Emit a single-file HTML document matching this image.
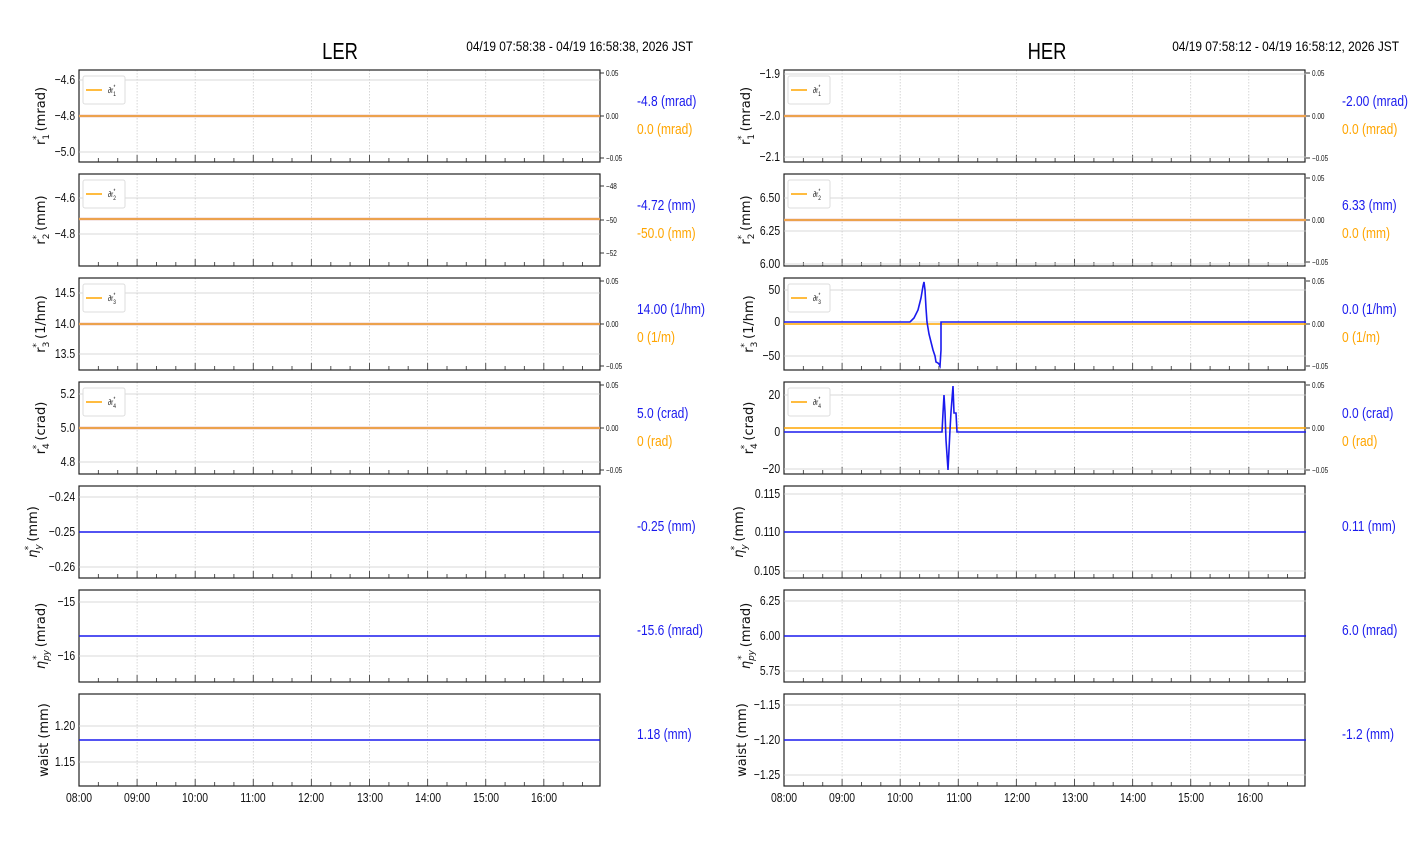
<!DOCTYPE html>
<html><head><meta charset="utf-8"><style>
html,body{margin:0;padding:0;background:#fff;width:1412px;height:864px;overflow:hidden}
svg{display:block}
.t{font-family:"Liberation Sans",sans-serif;font-size:13px;fill:#111}
.s{font-family:"Liberation Sans",sans-serif;font-size:8px;fill:#111}
.yl{font-family:"DejaVu Sans","Liberation Sans",sans-serif;font-size:13px;fill:#111}
.v{font-family:"Liberation Sans",sans-serif;font-size:15px}
.ti{font-family:"Liberation Sans",sans-serif;font-size:23px;fill:#000}
.hd{font-family:"Liberation Sans",sans-serif;font-size:14px;fill:#000}
text.t,text.s,.t text,.v text,text.ti,text.hd{transform-box:fill-box;transform:scaleX(.8);transform-origin:left center}
text.hd{transform:scaleX(.85)}
text.t[text-anchor="end"],text.hd{transform-origin:right center}
.t[text-anchor="middle"] text,text.ti{transform-origin:center center}
</style></head><body>
<svg width="1412" height="864" viewBox="0 0 1412 864" xmlns="http://www.w3.org/2000/svg">
<defs>
<g id="fr">
<g stroke="#ccc" stroke-width="0.8" stroke-dasharray="1.5,1.5">
<line x1="58.1" y1="0" x2="58.1" y2="92"/><line x1="116.2" y1="0" x2="116.2" y2="92"/><line x1="174.3" y1="0" x2="174.3" y2="92"/><line x1="232.4" y1="0" x2="232.4" y2="92"/><line x1="290.5" y1="0" x2="290.5" y2="92"/><line x1="348.6" y1="0" x2="348.6" y2="92"/><line x1="406.7" y1="0" x2="406.7" y2="92"/><line x1="464.8" y1="0" x2="464.8" y2="92"/>
</g>
<g stroke="#555" stroke-width="1">
<line x1="0" y1="92" x2="0" y2="85"/><line x1="58.1" y1="92" x2="58.1" y2="85"/><line x1="116.2" y1="92" x2="116.2" y2="85"/><line x1="174.3" y1="92" x2="174.3" y2="85"/><line x1="232.4" y1="92" x2="232.4" y2="85"/><line x1="290.5" y1="92" x2="290.5" y2="85"/><line x1="348.6" y1="92" x2="348.6" y2="85"/><line x1="406.7" y1="92" x2="406.7" y2="85"/><line x1="464.8" y1="92" x2="464.8" y2="85"/>
<line x1="19.4" y1="92" x2="19.4" y2="88"/><line x1="38.7" y1="92" x2="38.7" y2="88"/><line x1="77.5" y1="92" x2="77.5" y2="88"/><line x1="96.8" y1="92" x2="96.8" y2="88"/><line x1="135.6" y1="92" x2="135.6" y2="88"/><line x1="154.9" y1="92" x2="154.9" y2="88"/><line x1="193.7" y1="92" x2="193.7" y2="88"/><line x1="213" y1="92" x2="213" y2="88"/><line x1="251.8" y1="92" x2="251.8" y2="88"/><line x1="271.1" y1="92" x2="271.1" y2="88"/><line x1="309.9" y1="92" x2="309.9" y2="88"/><line x1="329.2" y1="92" x2="329.2" y2="88"/><line x1="368" y1="92" x2="368" y2="88"/><line x1="387.3" y1="92" x2="387.3" y2="88"/><line x1="426.1" y1="92" x2="426.1" y2="88"/><line x1="445.4" y1="92" x2="445.4" y2="88"/><line x1="484.2" y1="92" x2="484.2" y2="88"/><line x1="503.5" y1="92" x2="503.5" y2="88"/>
</g>
<rect x="0" y="0" width="521" height="92" fill="none" stroke="#222" stroke-width="1.2"/>
</g>
<g id="lg">
<rect x="4" y="6" width="42" height="28" rx="2" fill="#fff" stroke="#ddd"/>
<line x1="7" y1="20" x2="23" y2="20" stroke="#ffa500" stroke-width="1.5"/>
</g>
</defs>

<text class="ti" x="340" y="59" text-anchor="middle">LER</text>
<text class="hd" x="693" y="51" text-anchor="end">04/19 07:58:38 - 04/19 16:58:38, 2026 JST</text>
<text class="ti" x="1047" y="59" text-anchor="middle">HER</text>
<text class="hd" x="1399" y="51" text-anchor="end">04/19 07:58:12 - 04/19 16:58:12, 2026 JST</text>

<!-- LEFT -->
<g transform="translate(79,70)"><use href="#fr"/>
<g stroke="#ccc" stroke-width="0.8"><line x1="0" y1="10" x2="521" y2="10"/><line x1="0" y1="46" x2="521" y2="46"/><line x1="0" y1="82" x2="521" y2="82"/></g>
<line x1="0" y1="46" x2="521" y2="46" stroke="#d9a09a" stroke-width="2.5"/><line x1="0" y1="46" x2="521" y2="46" stroke="#ffa500" stroke-width="1"/>
<use href="#lg"/><text class="s" x="29" y="23">∂r<tspan font-size="6" dy="3">1</tspan><tspan font-size="6" dx="-3" dy="-7">*</tspan></text>
<text class="t" x="-4" y="14" text-anchor="end">−4.6</text><text class="t" x="-4" y="50" text-anchor="end">−4.8</text><text class="t" x="-4" y="86" text-anchor="end">−5.0</text>
<g stroke="#333"><line x1="521" y1="3" x2="525" y2="3"/><line x1="521" y1="46" x2="525" y2="46"/><line x1="521" y1="88" x2="525" y2="88"/></g>
<text class="s" x="527" y="6">0.05</text><text class="s" x="527" y="49">0.00</text><text class="s" x="527" y="91">−0.05</text>
</g>
<g transform="translate(79,174)"><use href="#fr"/>
<g stroke="#ccc" stroke-width="0.8"><line x1="0" y1="24" x2="521" y2="24"/><line x1="0" y1="60" x2="521" y2="60"/></g>
<line x1="0" y1="45" x2="521" y2="45" stroke="#d9a09a" stroke-width="2.5"/><line x1="0" y1="45" x2="521" y2="45" stroke="#ffa500" stroke-width="1"/>
<use href="#lg"/><text class="s" x="29" y="23">∂r<tspan font-size="6" dy="3">2</tspan><tspan font-size="6" dx="-3" dy="-7">*</tspan></text>
<text class="t" x="-4" y="28" text-anchor="end">−4.6</text><text class="t" x="-4" y="64" text-anchor="end">−4.8</text>
<g stroke="#333"><line x1="521" y1="12" x2="525" y2="12"/><line x1="521" y1="46" x2="525" y2="46"/><line x1="521" y1="79" x2="525" y2="79"/></g>
<text class="s" x="527" y="15">−48</text><text class="s" x="527" y="49">−50</text><text class="s" x="527" y="82">−52</text>
</g>
<g transform="translate(79,278)"><use href="#fr"/>
<g stroke="#ccc" stroke-width="0.8"><line x1="0" y1="15" x2="521" y2="15"/><line x1="0" y1="46" x2="521" y2="46"/><line x1="0" y1="76" x2="521" y2="76"/></g>
<line x1="0" y1="46" x2="521" y2="46" stroke="#d9a09a" stroke-width="2.5"/><line x1="0" y1="46" x2="521" y2="46" stroke="#ffa500" stroke-width="1"/>
<use href="#lg"/><text class="s" x="29" y="23">∂r<tspan font-size="6" dy="3">3</tspan><tspan font-size="6" dx="-3" dy="-7">*</tspan></text>
<text class="t" x="-4" y="19" text-anchor="end">14.5</text><text class="t" x="-4" y="50" text-anchor="end">14.0</text><text class="t" x="-4" y="80" text-anchor="end">13.5</text>
<g stroke="#333"><line x1="521" y1="3" x2="525" y2="3"/><line x1="521" y1="46" x2="525" y2="46"/><line x1="521" y1="88" x2="525" y2="88"/></g>
<text class="s" x="527" y="6">0.05</text><text class="s" x="527" y="49">0.00</text><text class="s" x="527" y="91">−0.05</text>
</g>
<g transform="translate(79,382)"><use href="#fr"/>
<g stroke="#ccc" stroke-width="0.8"><line x1="0" y1="12" x2="521" y2="12"/><line x1="0" y1="46" x2="521" y2="46"/><line x1="0" y1="80" x2="521" y2="80"/></g>
<line x1="0" y1="46" x2="521" y2="46" stroke="#d9a09a" stroke-width="2.5"/><line x1="0" y1="46" x2="521" y2="46" stroke="#ffa500" stroke-width="1"/>
<use href="#lg"/><text class="s" x="29" y="23">∂r<tspan font-size="6" dy="3">4</tspan><tspan font-size="6" dx="-3" dy="-7">*</tspan></text>
<text class="t" x="-4" y="16" text-anchor="end">5.2</text><text class="t" x="-4" y="50" text-anchor="end">5.0</text><text class="t" x="-4" y="84" text-anchor="end">4.8</text>
<g stroke="#333"><line x1="521" y1="3" x2="525" y2="3"/><line x1="521" y1="46" x2="525" y2="46"/><line x1="521" y1="88" x2="525" y2="88"/></g>
<text class="s" x="527" y="6">0.05</text><text class="s" x="527" y="49">0.00</text><text class="s" x="527" y="91">−0.05</text>
</g>
<g transform="translate(79,486)"><use href="#fr"/>
<g stroke="#ccc" stroke-width="0.8"><line x1="0" y1="11" x2="521" y2="11"/><line x1="0" y1="46" x2="521" y2="46"/><line x1="0" y1="81" x2="521" y2="81"/></g>
<line x1="0" y1="46" x2="521" y2="46" stroke="#1a1aee" stroke-width="1.6"/>
<text class="t" x="-4" y="15" text-anchor="end">−0.24</text><text class="t" x="-4" y="50" text-anchor="end">−0.25</text><text class="t" x="-4" y="85" text-anchor="end">−0.26</text>
</g>
<g transform="translate(79,590)"><use href="#fr"/>
<g stroke="#ccc" stroke-width="0.8"><line x1="0" y1="12" x2="521" y2="12"/><line x1="0" y1="66" x2="521" y2="66"/></g>
<line x1="0" y1="46" x2="521" y2="46" stroke="#1a1aee" stroke-width="1.6"/>
<text class="t" x="-4" y="16" text-anchor="end">−15</text><text class="t" x="-4" y="70" text-anchor="end">−16</text>
</g>
<g transform="translate(79,694)"><use href="#fr"/>
<g stroke="#ccc" stroke-width="0.8"><line x1="0" y1="32" x2="521" y2="32"/><line x1="0" y1="68" x2="521" y2="68"/></g>
<line x1="0" y1="46" x2="521" y2="46" stroke="#1a1aee" stroke-width="1.6"/>
<text class="t" x="-4" y="36" text-anchor="end">1.20</text><text class="t" x="-4" y="72" text-anchor="end">1.15</text>
</g>
<g class="t" text-anchor="middle">
<text x="79" y="802">08:00</text><text x="137" y="802">09:00</text><text x="195" y="802">10:00</text><text x="253" y="802">11:00</text><text x="311" y="802">12:00</text><text x="370" y="802">13:00</text><text x="428" y="802">14:00</text><text x="486" y="802">15:00</text><text x="544" y="802">16:00</text>
</g>

<g class="yl" text-anchor="middle">
<text transform="translate(45,116) rotate(-90)">r<tspan font-size="9" dy="4">1</tspan><tspan font-size="9" dx="-6" dy="-10">*</tspan><tspan dy="6"> (mrad)</tspan></text>
<text transform="translate(45,220) rotate(-90)">r<tspan font-size="9" dy="4">2</tspan><tspan font-size="9" dx="-6" dy="-10">*</tspan><tspan dy="6"> (mm)</tspan></text>
<text transform="translate(45,324) rotate(-90)">r<tspan font-size="9" dy="4">3</tspan><tspan font-size="9" dx="-6" dy="-10">*</tspan><tspan dy="6"> (1/hm)</tspan></text>
<text transform="translate(45,428) rotate(-90)">r<tspan font-size="9" dy="4">4</tspan><tspan font-size="9" dx="-6" dy="-10">*</tspan><tspan dy="6"> (crad)</tspan></text>
<text transform="translate(37,532) rotate(-90)"><tspan font-style="italic">η</tspan><tspan font-size="9" dy="4" font-style="italic">y</tspan><tspan font-size="9" dx="-6" dy="-10">*</tspan><tspan dy="6"> (mm)</tspan></text>
<text transform="translate(45,636) rotate(-90)"><tspan font-style="italic">η</tspan><tspan font-size="9" dy="4" font-style="italic">py</tspan><tspan font-size="9" dx="-10" dy="-10">*</tspan><tspan dx="4" dy="6"> (mrad)</tspan></text>
<text transform="translate(48,740) rotate(-90)">waist (mm)</text>
</g>

<g class="v">
<text x="637" y="106" fill="#1a1aee">-4.8 (mrad)</text><text x="637" y="134" fill="#ffa500">0.0 (mrad)</text>
<text x="637" y="210" fill="#1a1aee">-4.72 (mm)</text><text x="637" y="238" fill="#ffa500">-50.0 (mm)</text>
<text x="637" y="314" fill="#1a1aee">14.00 (1/hm)</text><text x="637" y="342" fill="#ffa500">0 (1/m)</text>
<text x="637" y="418" fill="#1a1aee">5.0 (crad)</text><text x="637" y="446" fill="#ffa500">0 (rad)</text>
<text x="637" y="531" fill="#1a1aee">-0.25 (mm)</text>
<text x="637" y="635" fill="#1a1aee">-15.6 (mrad)</text>
<text x="637" y="739" fill="#1a1aee">1.18 (mm)</text>
</g>

<!-- RIGHT -->
<g transform="translate(784,70)"><use href="#fr"/>
<g stroke="#ccc" stroke-width="0.8"><line x1="0" y1="4" x2="522" y2="4"/><line x1="0" y1="46" x2="522" y2="46"/><line x1="0" y1="87" x2="522" y2="87"/></g>
<line x1="0" y1="46" x2="522" y2="46" stroke="#d9a09a" stroke-width="2.5"/><line x1="0" y1="46" x2="522" y2="46" stroke="#ffa500" stroke-width="1"/>
<use href="#lg"/><text class="s" x="29" y="23">∂r<tspan font-size="6" dy="3">1</tspan><tspan font-size="6" dx="-3" dy="-7">*</tspan></text>
<text class="t" x="-4" y="8" text-anchor="end">−1.9</text><text class="t" x="-4" y="50" text-anchor="end">−2.0</text><text class="t" x="-4" y="91" text-anchor="end">−2.1</text>
<g stroke="#333"><line x1="522" y1="3" x2="526" y2="3"/><line x1="522" y1="46" x2="526" y2="46"/><line x1="522" y1="88" x2="526" y2="88"/></g>
<text class="s" x="528" y="6">0.05</text><text class="s" x="528" y="49">0.00</text><text class="s" x="528" y="91">−0.05</text>
</g>
<g transform="translate(784,174)"><use href="#fr"/>
<g stroke="#ccc" stroke-width="0.8"><line x1="0" y1="24" x2="522" y2="24"/><line x1="0" y1="57" x2="522" y2="57"/><line x1="0" y1="90" x2="522" y2="90"/></g>
<line x1="0" y1="46" x2="522" y2="46" stroke="#d9a09a" stroke-width="2.5"/><line x1="0" y1="46" x2="522" y2="46" stroke="#ffa500" stroke-width="1"/>
<use href="#lg"/><text class="s" x="29" y="23">∂r<tspan font-size="6" dy="3">2</tspan><tspan font-size="6" dx="-3" dy="-7">*</tspan></text>
<text class="t" x="-4" y="28" text-anchor="end">6.50</text><text class="t" x="-4" y="61" text-anchor="end">6.25</text><text class="t" x="-4" y="94" text-anchor="end">6.00</text>
<g stroke="#333"><line x1="522" y1="4" x2="526" y2="4"/><line x1="522" y1="46" x2="526" y2="46"/><line x1="522" y1="88" x2="526" y2="88"/></g>
<text class="s" x="528" y="7">0.05</text><text class="s" x="528" y="49">0.00</text><text class="s" x="528" y="91">−0.05</text>
</g>
<g transform="translate(784,278)"><use href="#fr"/>
<g stroke="#ccc" stroke-width="0.8"><line x1="0" y1="12" x2="522" y2="12"/><line x1="0" y1="44" x2="522" y2="44"/><line x1="0" y1="78" x2="522" y2="78"/></g>
<line x1="0" y1="46" x2="522" y2="46" stroke="#ffa500" stroke-width="1.4"/>
<polyline fill="none" stroke="#1a1aee" stroke-width="1.6" points="0,44 126,44 130,40 134,32 137,20 139,8 140,4 141,12 142,30 143,44 145,56 147,64 149,72 151,78 152,84 154,85 155,86 156,88 157,72 157,44 522,44"/>
<use href="#lg"/><text class="s" x="29" y="23">∂r<tspan font-size="6" dy="3">3</tspan><tspan font-size="6" dx="-3" dy="-7">*</tspan></text>
<text class="t" x="-4" y="16" text-anchor="end">50</text><text class="t" x="-4" y="48" text-anchor="end">0</text><text class="t" x="-4" y="82" text-anchor="end">−50</text>
<g stroke="#333"><line x1="522" y1="3" x2="526" y2="3"/><line x1="522" y1="46" x2="526" y2="46"/><line x1="522" y1="88" x2="526" y2="88"/></g>
<text class="s" x="528" y="6">0.05</text><text class="s" x="528" y="49">0.00</text><text class="s" x="528" y="91">−0.05</text>
</g>
<g transform="translate(784,382)"><use href="#fr"/>
<g stroke="#ccc" stroke-width="0.8"><line x1="0" y1="13" x2="522" y2="13"/><line x1="0" y1="50" x2="522" y2="50"/><line x1="0" y1="87" x2="522" y2="87"/></g>
<line x1="0" y1="46" x2="522" y2="46" stroke="#ffa500" stroke-width="1.4"/>
<polyline fill="none" stroke="#1a1aee" stroke-width="1.6" points="0,50 158,50 159,31 160,13 161,30 162,58 163,73 164,88 165,68 166,48 167,30 169,4 170,31 172,31 173,50 522,50"/>
<use href="#lg"/><text class="s" x="29" y="23">∂r<tspan font-size="6" dy="3">4</tspan><tspan font-size="6" dx="-3" dy="-7">*</tspan></text>
<text class="t" x="-4" y="17" text-anchor="end">20</text><text class="t" x="-4" y="54" text-anchor="end">0</text><text class="t" x="-4" y="91" text-anchor="end">−20</text>
<g stroke="#333"><line x1="522" y1="3" x2="526" y2="3"/><line x1="522" y1="46" x2="526" y2="46"/><line x1="522" y1="88" x2="526" y2="88"/></g>
<text class="s" x="528" y="6">0.05</text><text class="s" x="528" y="49">0.00</text><text class="s" x="528" y="91">−0.05</text>
</g>
<g transform="translate(784,486)"><use href="#fr"/>
<g stroke="#ccc" stroke-width="0.8"><line x1="0" y1="8" x2="522" y2="8"/><line x1="0" y1="46" x2="522" y2="46"/><line x1="0" y1="85" x2="522" y2="85"/></g>
<line x1="0" y1="46" x2="522" y2="46" stroke="#1a1aee" stroke-width="1.6"/>
<text class="t" x="-4" y="12" text-anchor="end">0.115</text><text class="t" x="-4" y="50" text-anchor="end">0.110</text><text class="t" x="-4" y="89" text-anchor="end">0.105</text>
</g>
<g transform="translate(784,590)"><use href="#fr"/>
<g stroke="#ccc" stroke-width="0.8"><line x1="0" y1="11" x2="522" y2="11"/><line x1="0" y1="46" x2="522" y2="46"/><line x1="0" y1="81" x2="522" y2="81"/></g>
<line x1="0" y1="46" x2="522" y2="46" stroke="#1a1aee" stroke-width="1.6"/>
<text class="t" x="-4" y="15" text-anchor="end">6.25</text><text class="t" x="-4" y="50" text-anchor="end">6.00</text><text class="t" x="-4" y="85" text-anchor="end">5.75</text>
</g>
<g transform="translate(784,694)"><use href="#fr"/>
<g stroke="#ccc" stroke-width="0.8"><line x1="0" y1="11" x2="522" y2="11"/><line x1="0" y1="46" x2="522" y2="46"/><line x1="0" y1="81" x2="522" y2="81"/></g>
<line x1="0" y1="46" x2="522" y2="46" stroke="#1a1aee" stroke-width="1.6"/>
<text class="t" x="-4" y="15" text-anchor="end">−1.15</text><text class="t" x="-4" y="50" text-anchor="end">−1.20</text><text class="t" x="-4" y="85" text-anchor="end">−1.25</text>
</g>
<g class="t" text-anchor="middle">
<text x="784" y="802">08:00</text><text x="842" y="802">09:00</text><text x="900" y="802">10:00</text><text x="959" y="802">11:00</text><text x="1017" y="802">12:00</text><text x="1075" y="802">13:00</text><text x="1133" y="802">14:00</text><text x="1191" y="802">15:00</text><text x="1250" y="802">16:00</text>
</g>

<g class="yl" text-anchor="middle">
<text transform="translate(750,116) rotate(-90)">r<tspan font-size="9" dy="4">1</tspan><tspan font-size="9" dx="-6" dy="-10">*</tspan><tspan dy="6"> (mrad)</tspan></text>
<text transform="translate(750,220) rotate(-90)">r<tspan font-size="9" dy="4">2</tspan><tspan font-size="9" dx="-6" dy="-10">*</tspan><tspan dy="6"> (mm)</tspan></text>
<text transform="translate(753,324) rotate(-90)">r<tspan font-size="9" dy="4">3</tspan><tspan font-size="9" dx="-6" dy="-10">*</tspan><tspan dy="6"> (1/hm)</tspan></text>
<text transform="translate(753,428) rotate(-90)">r<tspan font-size="9" dy="4">4</tspan><tspan font-size="9" dx="-6" dy="-10">*</tspan><tspan dy="6"> (crad)</tspan></text>
<text transform="translate(743,532) rotate(-90)"><tspan font-style="italic">η</tspan><tspan font-size="9" dy="4" font-style="italic">y</tspan><tspan font-size="9" dx="-6" dy="-10">*</tspan><tspan dy="6"> (mm)</tspan></text>
<text transform="translate(750,636) rotate(-90)"><tspan font-style="italic">η</tspan><tspan font-size="9" dy="4" font-style="italic">py</tspan><tspan font-size="9" dx="-10" dy="-10">*</tspan><tspan dx="4" dy="6"> (mrad)</tspan></text>
<text transform="translate(746,740) rotate(-90)">waist (mm)</text>
</g>

<g class="v">
<text x="1342" y="106" fill="#1a1aee">-2.00 (mrad)</text><text x="1342" y="134" fill="#ffa500">0.0 (mrad)</text>
<text x="1342" y="210" fill="#1a1aee">6.33 (mm)</text><text x="1342" y="238" fill="#ffa500">0.0 (mm)</text>
<text x="1342" y="314" fill="#1a1aee">0.0 (1/hm)</text><text x="1342" y="342" fill="#ffa500">0 (1/m)</text>
<text x="1342" y="418" fill="#1a1aee">0.0 (crad)</text><text x="1342" y="446" fill="#ffa500">0 (rad)</text>
<text x="1342" y="531" fill="#1a1aee">0.11 (mm)</text>
<text x="1342" y="635" fill="#1a1aee">6.0 (mrad)</text>
<text x="1342" y="739" fill="#1a1aee">-1.2 (mm)</text>
</g>
</svg>
</body></html>
